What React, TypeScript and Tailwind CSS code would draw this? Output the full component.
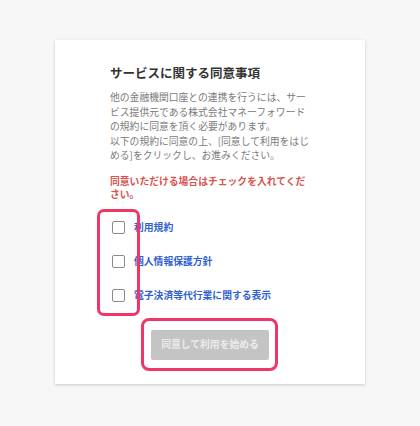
import React from 'react';

const items = ['利用規約', '個人情報保護方針', '電子決済等代行業に関する表示'];

const ConsentCard = () => {
  return (
    <div className="relative ml-[55px] mt-[40px] w-[310px] bg-white pl-[55px] pr-[20px] pt-[25px] pb-[24px] shadow-[0_1px_3px_rgba(0,0,0,0.18)]">
      <h2 className="text-[12.5px] leading-[16px] font-bold text-[#333]">サービスに関する同意事項</h2>

      <p className="mt-[9px] whitespace-nowrap text-[9.8px] leading-[14.5px] text-[#7a7a7a]">
        他の金融機関口座との連携を行うには、サー<br />
        ビス提供元である株式会社マネーフォワード<br />
        の規約に同意を頂く必要があります。<br />
        以下の規約に同意の上、[同意して利用をはじ<br />
        める]をクリックし、お進みください。
      </p>

      <p className="mt-[12px] whitespace-nowrap text-[9.8px] leading-[13px] font-bold text-[#d9534f]">
        同意いただける場合はチェックを入れてくだ<br />
        さい。
      </p>

      <ul className="mt-[10px]">
        {items.map((label) => (
          <li key={label} className="flex h-[34px] items-center">
            <span className="ml-[2px] h-[13px] w-[13px] rounded-[2px] border-[1.5px] border-[#8a8a8a] bg-white" />
            <a className="ml-[9px] text-[9.8px] font-bold text-[#2f5fd0]">{label}</a>
          </li>
        ))}
      </ul>

      <div className="-ml-[55px] -mr-[20px] mt-[17px] flex justify-center">
        <button className="h-[30px] w-[118px] rounded-[2px] bg-[#c4c4c4] text-[9.8px] font-bold text-[#ececec]">
          同意して利用を始める
        </button>
      </div>

      {/* annotation highlights */}
      <div className="pointer-events-none absolute left-[42px] top-[169px] h-[107px] w-[43px] rounded-[7px] border-[3px] border-[#ee3766]" />
      <div className="pointer-events-none absolute left-[86px] top-[278px] h-[53px] w-[137px] rounded-[8px] border-[3px] border-[#ee3766]" />
    </div>
  );
};

export default function App() {
  return (
    <div className="h-[426px] w-[420px] overflow-hidden bg-[#f7f7f7] pt-px font-['Noto_Sans_CJK_JP',sans-serif]">
      <div className="-mt-px">
        <ConsentCard />
      </div>
    </div>
  );
}
